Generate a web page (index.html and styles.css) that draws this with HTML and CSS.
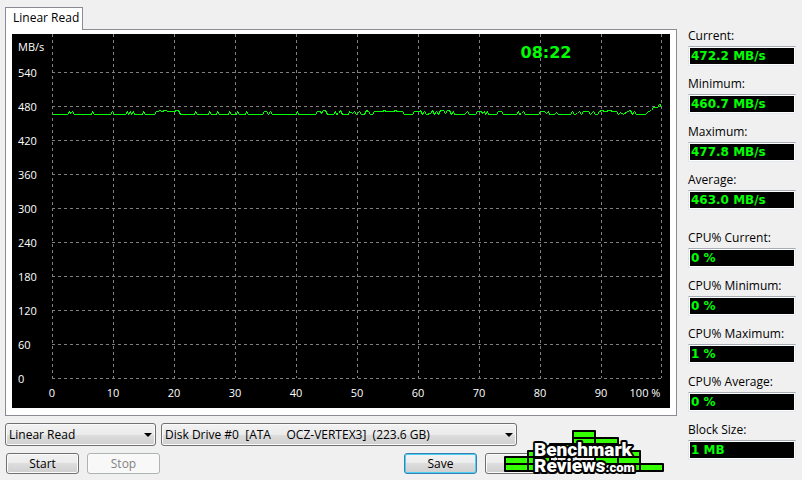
FILE: index.html
```html
<!DOCTYPE html>
<html lang="en">
<head>
    <meta charset="UTF-8">
    <meta name="viewport" content="width=device-width, initial-scale=1.0">
    <title>Disk Benchmark</title>
    <link rel="stylesheet" href="styles.css">
</head>
<body>

    <main class="window">
        <section class="main">
            <div class="tabs" role="tablist">
                <button class="tab" type="button" role="tab" aria-selected="true">Linear Read</button>
            </div>
            <div class="panel">
                <svg class="chart" viewBox="12 34 658 374" role="img" aria-label="Linear read speed">
                    <rect x="12" y="34" width="658" height="374" fill="#000"/>
                    <path class="grid" d="M52 72.5H662M52 106.5H662M52 140.5H662M52 174.5H662M52 208.5H662M52 242.5H662M52 276.5H662M52 310.5H662M52 344.5H662M52 378.5H662"/>
                    <path class="grid" d="M52.5 34V378M113.5 34V378M174.5 34V378M235.5 34V378M296.5 34V378M357.5 34V378M418.5 34V378M479.5 34V378M540.5 34V378M601.5 34V378M661.5 34V378"/>
                    <polyline class="trace" transform="translate(0.5 0.5)" points="52,114 67,114 69,111 70,113 72,111 74,114 91,114 92,111 94,114 110,114 112,111 114,114 125,114 127,111 128,114 130,111 131,114 133,111 134,114 142,114 143,111 145,114 154,114 156,111 158,111 159,110 162,111 164,110 169,111 174,111 176,110 178,110 180,114 194,114 195,111 197,114 208,114 209,111 211,114 216,114 217,111 219,114 228,114 229,111 231,114 236,114 237,111 239,114 245,114 246,111 248,114
                        262,114 264,111 266,111 268,114 270,111 272,114 295,114 297,111 298,114 315,114 317,111 320,111 321,113 323,110 325,110 327,114 333,114 335,111 336,114 338,113 340,110 342,114 348,114 349,111 352,113 354,111 356,114 359,111 361,114 364,114 366,110 368,111 370,114 372,114 374,111 382,111 384,110 386,111 393,111 395,110 397,111 402,111 404,114 412,114 414,111 419,111 420,110 422,114 424,111 426,114 430,113 432,110 434,114 436,111 438,114 440,110 443,110 445,113 447,110 449,110 451,114 453,111 454,114 464,114
                        467,111 469,114 475,114 477,111 481,111 482,113 484,111 485,114 487,111 488,114 496,114 498,111 501,111 503,114 516,114 518,111 519,114 521,113 523,111 525,114 538,114 540,111 544,111 546,113 548,111 549,114 554,114 556,112 558,114 570,114 572,111 574,114 577,113 579,111 581,114 583,111 588,111 590,114 593,111 595,114 597,114 599,111 601,110 605,111 609,110 613,111 616,111 618,114 620,112 623,114 627,111 630,110 632,114 634,111 636,114 645,114 648,111 651,110 653,107 657,107 659,104 660,104 661,107"/>
                    <g class="axis">
                        <text x="18" y="51">MB/s</text>
                        <text x="18" y="77">540</text>
                        <text x="18" y="111">480</text>
                        <text x="18" y="145">420</text>
                        <text x="18" y="179">360</text>
                        <text x="18" y="213">300</text>
                        <text x="18" y="247">240</text>
                        <text x="18" y="281">180</text>
                        <text x="18" y="315">120</text>
                        <text x="18" y="349">60</text>
                        <text x="18" y="383">0</text>
                    </g>
                    <g class="axis axis-x">
                        <text x="52" y="397">0</text>
                        <text x="113" y="397">10</text>
                        <text x="174" y="397">20</text>
                        <text x="235" y="397">30</text>
                        <text x="296" y="397">40</text>
                        <text x="357" y="397">50</text>
                        <text x="418" y="397">60</text>
                        <text x="479" y="397">70</text>
                        <text x="540" y="397">80</text>
                        <text x="601" y="397">90</text>
                        <text x="645" y="397">100 %</text>
                    </g>
                    <text class="clock" x="546" y="58">08:22</text>
                </svg>
            </div>

            <div class="controls">
                <div class="selects">
                    <div class="select select-test">
                        <select id="test" aria-label="Test">
                            <option>Linear Read</option>
                        </select>
                    </div>
                    <div class="select select-drive">
                        <select id="drive" aria-label="Drive">
                            <option>Disk Drive #0&nbsp; [ATA&nbsp;&nbsp;&nbsp;&nbsp; OCZ-VERTEX3]&nbsp; (223.6 GB)</option>
                        </select>
                    </div>
                </div>
                <div class="buttons">
                    <button class="btn" type="button">Start</button>
                    <button class="btn" type="button" disabled>Stop</button>
                    <button class="btn btn-default" type="button">Save</button>
                    <button class="btn" type="button" aria-label="Clear"></button>
                </div>

                <svg class="logo" viewBox="0 0 162 50">
                    <g class="bricks">
                        <rect x="70" y="2" width="22" height="7"/>
                        <rect x="70" y="9" width="22" height="7"/>
                        <rect x="92" y="9" width="23" height="7"/>
                        <rect x="47" y="15" width="23" height="7"/>
                        <rect x="70" y="15" width="22" height="7"/>
                        <rect x="92" y="15" width="23" height="7"/>
                        <rect x="25" y="22" width="22" height="7"/>
                        <rect x="115" y="22" width="22" height="7"/>
                        <rect x="2" y="28" width="23" height="7"/>
                        <rect x="25" y="28" width="22" height="7"/>
                        <rect x="92" y="28" width="23" height="7"/>
                        <rect x="115" y="28" width="22" height="7"/>
                        <rect x="2" y="35" width="23" height="7"/>
                        <rect x="25" y="35" width="22" height="7"/>
                        <rect x="115" y="35" width="22" height="7"/>
                        <rect x="137" y="35" width="23" height="7"/>
                    </g>
                    <text class="logo-text" x="31" y="27">Benchmark</text>
                    <text class="logo-text" x="31" y="43">Reviews<tspan class="logo-com">.com</tspan></text>
                </svg>
            </div>
        </section>

        <aside class="stats">
            <div class="stat">
                <label for="current">Current:</label>
                <output id="current">472.2 MB/s</output>
            </div>
            <div class="stat">
                <label for="minimum">Minimum:</label>
                <output id="minimum">460.7 MB/s</output>
            </div>
            <div class="stat">
                <label for="maximum">Maximum:</label>
                <output id="maximum">477.8 MB/s</output>
            </div>
            <div class="stat">
                <label for="average">Average:</label>
                <output id="average">463.0 MB/s</output>
            </div>
            <div class="stat stat-group">
                <label for="cpu-current">CPU% Current:</label>
                <output id="cpu-current">0 %</output>
            </div>
            <div class="stat">
                <label for="cpu-minimum">CPU% Minimum:</label>
                <output id="cpu-minimum">0 %</output>
            </div>
            <div class="stat">
                <label for="cpu-maximum">CPU% Maximum:</label>
                <output id="cpu-maximum">1 %</output>
            </div>
            <div class="stat">
                <label for="cpu-average">CPU% Average:</label>
                <output id="cpu-average">0 %</output>
            </div>
            <div class="stat">
                <label for="block-size">Block Size:</label>
                <output id="block-size">1 MB</output>
            </div>
        </aside>
    </main>

</body>
</html>
```
FILE: styles.css
```css
* {
    box-sizing: border-box;
}
body {
    margin: 0;
    background: #f0f0f0;
    color: #000;
    font-family: "Open Sans", "Noto Sans", sans-serif;
    font-size: 12px;
}
button, select {
    font: inherit;
    color: inherit;
}
.window {
    display: flex;
    gap: 11px;
    padding: 7px 6px 0 5px;
}
.main {
    flex: 1;
    min-width: 0;
}

/* tab and chart */
.tabs {
    display: flex;
}
.tab {
    position: relative;
    height: 23px;
    margin-bottom: -1px;
    padding: 0 3px 3px 7px;
    border: 1px solid #898c95;
    border-bottom: none;
    background: #fff;
}
.panel {
    padding: 4px 6px 7px;
    border: 1px solid #898c95;
    background: #fff;
}
.chart {
    display: block;
    width: 100%;
}
.grid {
    fill: none;
    stroke: #808080;
    stroke-dasharray: 3 3;
    shape-rendering: crispEdges;
}
.trace {
    fill: none;
    stroke: #00ff00;
    shape-rendering: crispEdges;
}
.axis {
    fill: #fff;
    font-size: 11px;
}
.axis-x {
    text-anchor: middle;
}
.clock {
    fill: #00ff00;
    font-family: "DejaVu Sans", Verdana, sans-serif;
    font-size: 16px;
    font-weight: bold;
    text-anchor: middle;
}

/* bottom controls */
.controls {
    position: relative;
    padding-top: 7px;
}
.selects {
    display: flex;
    gap: 5px;
    margin-right: 160px;
}
.select {
    position: relative;
}
.select-test {
    width: 151px;
}
.select-drive {
    flex: 1;
}
.select::after {
    content: "";
    position: absolute;
    top: 10px;
    right: 4px;
    border: 4px solid transparent;
    border-top-color: #000;
    border-bottom: none;
    pointer-events: none;
}
select {
    display: block;
    appearance: none;
    width: 100%;
    height: 23px;
    padding: 0 16px 0 3px;
}
select, .btn {
    border: 1px solid #707070;
    border-radius: 3px;
    background: linear-gradient(#f2f2f2, #ebebeb 50%, #dddddd 50%, #cfcfcf);
    box-shadow: inset 0 0 0 1px #fbfbfb;
}
.buttons {
    display: flex;
    gap: 8px;
    margin: 7px 119px 0 1px;
}
.btn {
    width: 73px;
    height: 21px;
    padding: 0;
    line-height: 18px;
}
.btn:disabled {
    border-color: #adb2b5;
    background: #f8f8f8;
    color: #838383;
}
.btn-default {
    margin-left: auto;
    border-color: #3c7fb1;
    box-shadow: inset 0 0 0 1px #48d1f5;
}
.logo {
    position: absolute;
    right: 12px;
    bottom: -5px;
    width: 162px;
    height: 50px;
}
.bricks {
    fill: #33ff00;
    stroke: #000;
    stroke-width: 2;
    stroke-linejoin: round;
}
.logo-text {
    fill: #fff;
    stroke: #000;
    stroke-width: 4;
    stroke-linejoin: round;
    paint-order: stroke;
    font-family: Roboto, "Open Sans", sans-serif;
    font-size: 19px;
    font-weight: 900;
}
.logo-com {
    font-size: 13px;
}

/* readouts */
.stats {
    display: flex;
    flex-direction: column;
    gap: 8px;
    width: 108px;
    padding-top: 19px;
}
.stat-group {
    margin-top: 10px;
}
.stat label {
    display: block;
    line-height: 20px;
}
.stat output {
    display: block;
    height: 20px;
    padding-left: 2px;
    border: 1px solid;
    border-color: #a7abb2 #e3e9ef #e3e9ef #e2e3ea;
    background: #000;
    box-shadow: inset 0 0 0 1px #fff;
    color: #00ff00;
    font-family: "DejaVu Sans", Verdana, sans-serif;
    font-size: 12px;
    font-weight: bold;
    line-height: 19px;
}
```
